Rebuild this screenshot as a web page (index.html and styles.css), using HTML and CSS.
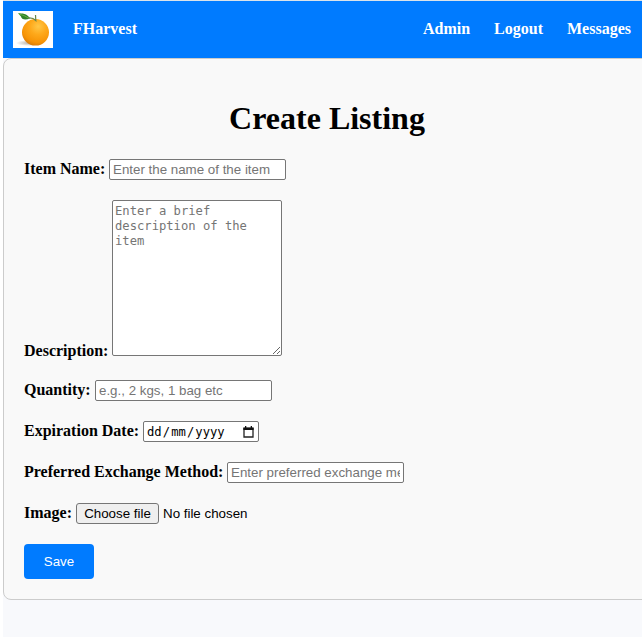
FILE: index.html
```html
<!DOCTYPE html>
<html lang="en">
<head>
<meta charset="utf-8">
<title>Create Listing</title>
<link rel="stylesheet" href="styles.css">
</head>
<body>
<div class="page">
<nav class="navbar">
  <svg class="logo" width="40" height="37" viewBox="0 0 40 37" aria-hidden="true">
    <defs>
      <radialGradient id="peel" cx=".6" cy=".28" r=".75">
        <stop offset="0" stop-color="#ffc747"/>
        <stop offset=".4" stop-color="#fea91b"/>
        <stop offset=".8" stop-color="#f79406"/>
        <stop offset="1" stop-color="#d97a08"/>
      </radialGradient>
      <radialGradient id="shade">
        <stop offset="0" stop-color="#b5b0a8"/>
        <stop offset="1" stop-color="#fff"/>
      </radialGradient>
    </defs>
    <rect width="40" height="37" fill="#fff"/>
    <ellipse cx="16" cy="32" rx="13" ry="3" fill="url(#shade)"/>
    <ellipse cx="22.500" cy="21.300" rx="13.500" ry="13.300" fill="url(#peel)"/>
    <path d="M5 2.200C9 2.500 14 2 17 7.500C12 9.500 8.500 8.500 8 5.500Z" fill="#2f8428"/>
    <path d="M6 3Q11 4 16 7.400" fill="none" stroke="#70b64b" stroke-width=".8"/>
    <path d="M15 7Q20 6.500 22.800 9.500L22.500 4" fill="none" stroke="#66864a" stroke-width="1.200"/>
  </svg>
  <span class="brand">FHarvest</span>
  <div class="links"><span>Admin</span><span>Logout</span><span>Messages</span></div>
</nav>
<main class="card">
  <h1>Create Listing</h1>
  <form>
    <div class="row"><label class="l-item" for="item">Item Name:</label><input id="item" type="text" placeholder="Enter the name of the item"></div>
    <div class="row row-area"><label class="l-desc" for="desc">Description:</label><textarea id="desc" placeholder="Enter a brief description of the item"></textarea></div>
    <div class="row"><label class="l-qty" for="qty">Quantity:</label><input id="qty" type="text" placeholder="e.g., 2 kgs, 1 bag etc"></div>
    <div class="row"><label class="l-date">Expiration Date:</label><div class="date"><span>dd</span><i>/</i><span>mm</span><i>/</i><span>yyyy</span>
      <svg width="11" height="12" viewBox="0 0 11 12" aria-hidden="true"><path d="M1 2.500h9v8.500H1z" fill="none" stroke="#222" stroke-width="1.300"/><path d="M.4 1.500h10.200v2.500H.4zM2 0h1.300v2H2zM7.700 0H9v2H7.700z" fill="#111"/></svg></div></div>
    <div class="row"><label class="l-method" for="method">Preferred Exchange Method:</label><input id="method" type="text" placeholder="Enter preferred exchange method"></div>
    <div class="row"><label class="l-image">Image:</label><button class="choose" type="button">Choose file</button><span class="file">No file chosen</span></div>
    <button class="save" type="button">Save</button>
  </form>
</main>
</div>
</body>
</html>
```

FILE: styles.css
```css
* { box-sizing: border-box; }
html { background: #fff; overflow: hidden; }
body {
  margin: 0;
  font: 16px "Liberation Serif", "Times New Roman", serif;
  color: #000;
}
.page {
  width: 648px;
  height: 637px;
  margin-left: 3px;
  border-top: 1px solid #dbe3ea;
  background: #f8f9fc;
}
.navbar {
  display: flex;
  align-items: center;
  height: 57px;
  padding: 0 20px 0 10px;
  background: #007bff;
  color: #fff;
  font-weight: bold;
}
.logo { display: block; }
.brand { margin-left: 20px; padding-bottom: 2px; }
.links {
  display: flex;
  gap: 24px;
  margin-left: auto;
  padding-bottom: 2px;
}
.card {
  height: 542px;
  padding: 39px 20px 20px;
  border: 1px solid #ccc;
  border-radius: 8px;
  background: #f9f9f9;
}
h1 {
  margin: 0 0 21px;
  font-size: 32px;
  line-height: 40px;
  text-align: center;
}
.row {
  display: flex;
  align-items: center;
  height: 21px;
  margin-bottom: 20px;
}
.row-area {
  align-items: flex-end;
  height: 160px;
}
label {
  flex: none;
  padding-bottom: 2px;
  font-weight: bold;
  white-space: nowrap;
}
.l-item { width: 85px; }
.l-desc { width: 88px; padding-bottom: 0; }
.l-qty { width: 71px; }
.l-date { width: 119px; }
.l-method { width: 203px; }
.l-image { width: 52px; }
input, .date, .choose {
  height: 21px;
  border: 1px solid #767676;
  border-radius: 2px;
  font: 13.333px "Liberation Sans", Arial, sans-serif;
}
input {
  width: 177px;
  padding: 1px 3px;
  background: #fff;
}
::placeholder { color: #757575; }
textarea {
  width: 170px;
  height: 156px;
  margin: 0 0 4px;
  padding: 3px 2px;
  border: 1px solid #767676;
  border-radius: 2px;
  background: #fff;
  font: 12.18px/15px "DejaVu Sans Mono", monospace;
}
.date {
  display: flex;
  align-items: center;
  width: 116px;
  padding: 0 4px 0 3px;
  background: #fff;
  font: 12.18px "DejaVu Sans Mono", monospace;
}
.date i {
  width: 9.5px;
  font-style: normal;
  text-align: center;
}
.date svg { margin-left: auto; }
.choose {
  width: 83px;
  padding: 0;
  border-radius: 3px;
  background: #efefef;
  color: #000;
}
.file {
  margin-left: 4px;
  font: 13.333px "Liberation Sans", Arial, sans-serif;
}
.save {
  display: block;
  width: 70px;
  height: 35px;
  border: 0;
  border-radius: 4px;
  background: #007bff;
  color: #fff;
  font: 13.333px "Liberation Sans", Arial, sans-serif;
}
```
